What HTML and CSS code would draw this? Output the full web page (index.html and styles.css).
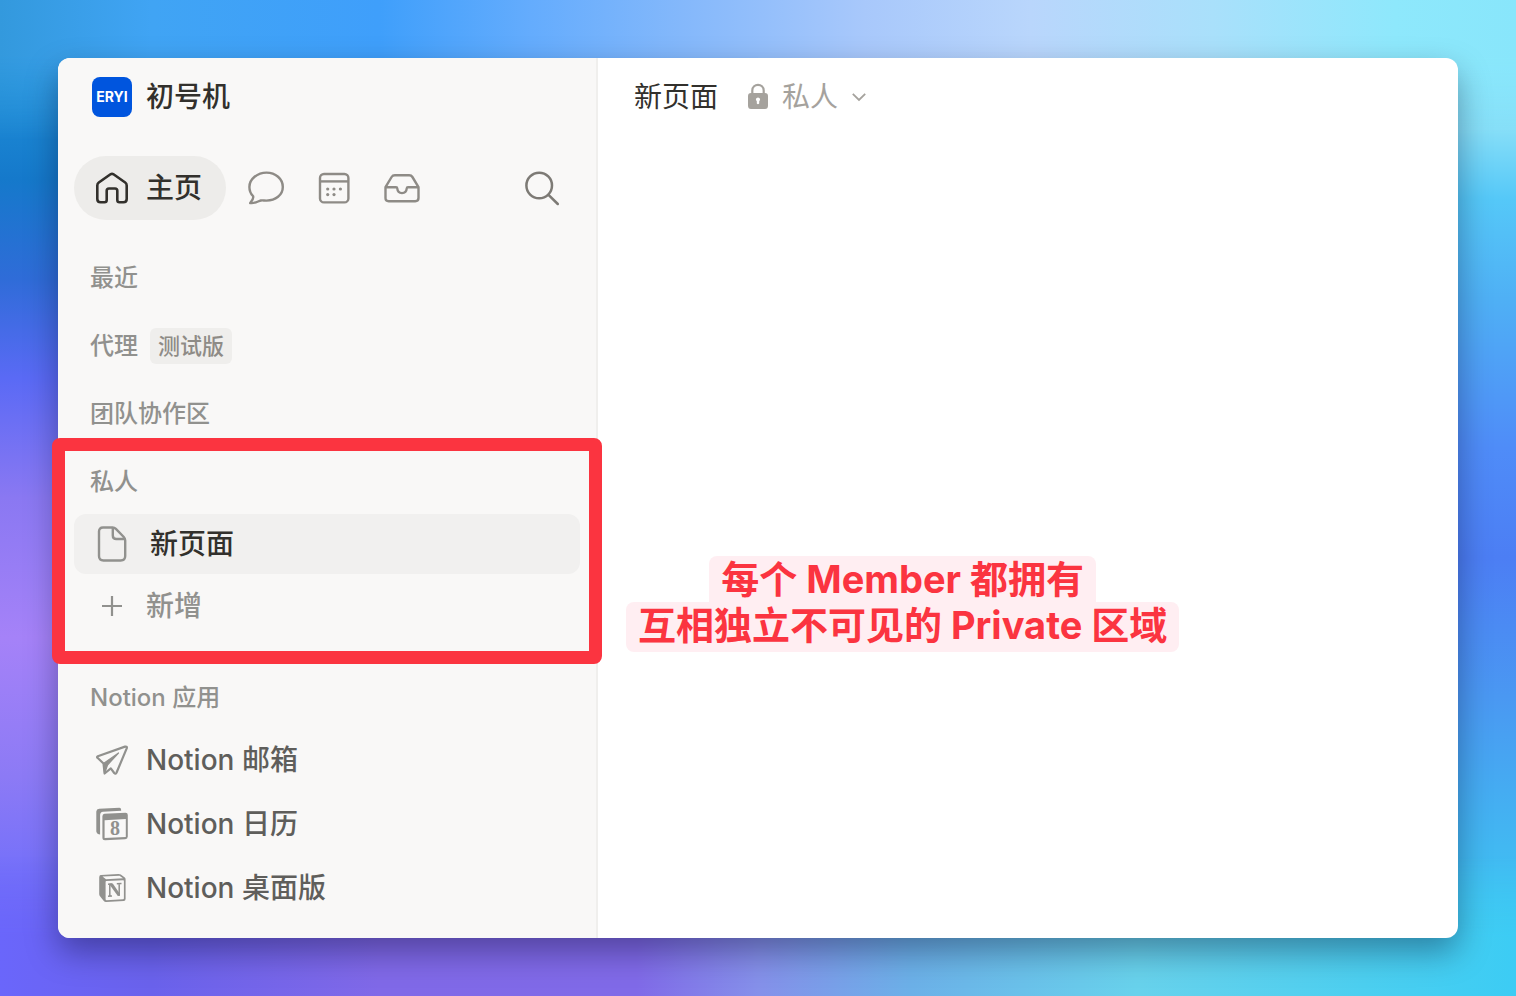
FILE: index.html
```html
<!DOCTYPE html>
<html lang="zh-CN">
<head>
<meta charset="utf-8">
<meta name="viewport" content="width=device-width, initial-scale=1">
<title>新页面</title>
<link rel="stylesheet" href="styles.css">
</head>
<body>
<div class="window">
  <aside class="sidebar">
    <header class="workspace">
      <span class="logo">ERYI</span>
      <span class="workspace-name">初号机</span>
    </header>
    <nav class="tabs">
      <button class="tab tab-active" type="button">
        <svg class="icon" viewBox="0 0 36 36" fill="none" stroke="currentColor" stroke-width="2.6" stroke-linejoin="round"><path d="M3.300 15.400Q3.300 13.600 4.800 12.500L16.500 4.300Q18 3.300 19.500 4.300L31.200 12.500Q32.700 13.600 32.700 15.400V29Q32.700 32.300 29.400 32.300H25.500Q23.300 32.300 23.300 30V20.800Q23.300 18.500 21 18.500H15Q12.700 18.500 12.700 20.800V30Q12.700 32.300 10.500 32.300H6.600Q3.300 32.300 3.300 29Z"/></svg>
        <span>主页</span>
      </button>
      <button class="tab" type="button" aria-label="聊天">
        <svg class="icon" viewBox="0 0 36 36" fill="none" stroke="currentColor" stroke-width="2.4" stroke-linejoin="round"><path d="M18.500 2.600C27.500 2.600 34.800 8.900 34.800 16.900S27.500 30.600 18.500 30.600C16 30.600 14.500 30.200 12.800 30.500C10 31.200 6.500 33.800 2.200 33C5 30 6 28.500 5 26C2.800 23.800 1.400 20.500 1.400 16.900C1.400 8.900 9.500 2.600 18.500 2.600Z"/></svg>
      </button>
      <button class="tab" type="button" aria-label="日历">
        <svg class="icon" viewBox="0 0 36 36" fill="none" stroke="currentColor" stroke-width="2.4"><rect x="4" y="4" width="28.400" height="28.400" rx="4"/><path d="M4 11.400H32.400"/><g fill="currentColor" stroke="none"><circle cx="11.700" cy="19" r="1.600"/><circle cx="18" cy="19" r="1.600"/><circle cx="24.400" cy="19" r="1.600"/><circle cx="11.700" cy="24.600" r="1.600"/><circle cx="18" cy="24.600" r="1.600"/></g></svg>
      </button>
      <button class="tab" type="button" aria-label="收件箱">
        <svg class="icon" viewBox="0 0 36 36" fill="none" stroke="currentColor" stroke-width="2.400" stroke-linejoin="round"><path d="M1.500 17.200L7.600 7Q8.700 5.200 10.800 5.200H25.200Q27.300 5.200 28.400 7L34.500 17.200V28Q34.500 31.200 31.300 31.200H4.700Q1.500 31.200 1.500 28ZM1.500 17.200H12Q13.200 17.200 13.300 18.500C13.800 24.600 22.200 24.600 22.700 18.500Q22.800 17.200 24 17.200H34.500"/></svg>
      </button>
      <button class="tab tab-search" type="button" aria-label="搜索">
        <svg class="icon" viewBox="0 0 36 36" fill="none" stroke="currentColor" stroke-width="2.500" stroke-linecap="round"><circle cx="15.200" cy="15.500" r="12.800"/><path d="M24.500 24.800L33.800 34"/></svg>
      </button>
    </nav>

    <section class="section"><h2 class="label">最近</h2></section>
    <section class="section"><h2 class="label">代理 <span class="tag">测试版</span></h2></section>
    <section class="section"><h2 class="label">团队协作区</h2></section>
    <section class="section private">
      <h2 class="label">私人</h2>
      <ul class="list list-private">
        <li><a class="item item-current" href="#">
          <svg class="icon" viewBox="0 0 36 36" fill="none" stroke="currentColor" stroke-width="2.400" stroke-linejoin="round"><path d="M9 1.500H18.500Q20.500 1.500 21.900 2.900L29.800 11Q31.200 12.400 31.200 14.400V30Q31.200 34.500 26.700 34.500H9.500Q5 34.500 5 30V5.500Q5 1.500 9 1.500ZM18.800 1.800V9.500Q18.800 13 22.300 13H30.500"/></svg>
          <span>新页面</span></a></li>
        <li><button class="item item-add" type="button">
          <svg class="icon" viewBox="0 0 36 36" fill="none" stroke="currentColor" stroke-width="2.200"><path d="M18 8V28M8 18H28"/></svg>
          <span>新增</span></button></li>
      </ul>
      <div class="highlight"></div>
    </section>
    <section class="section apps">
      <h2 class="label">Notion 应用</h2>
      <ul class="list list-apps">
        <li><a class="item" href="#">
          <svg class="icon" viewBox="0 0 36 36" fill="none" stroke="currentColor" stroke-width="2.200" stroke-linejoin="round"><path d="M3.500 15.800Q2.500 15 3.800 14.300L31 4.600Q33.500 4 32.700 6.400L22.600 30.500Q21.600 32.600 20.200 31L16.800 26.400L10.600 31.500L9.500 21.500Z"/><path d="M9.500 21.500L24.500 11L13.500 23L10.600 31.500Z" fill="currentColor" stroke-width="1.200"/></svg>
          <span>Notion 邮箱</span></a></li>
        <li><a class="item" href="#">
          <svg class="icon" viewBox="0 0 36 36"><path fill="currentColor" d="M2.300 5.500Q2.500 3 5.200 2.700L25.500 1.800Q27.500 2 27.200 4.700L9 5.800Q6.200 6.200 6.100 9V28.500Q3 28.500 2.300 25.500Z"/><path fill="currentColor" fill-rule="evenodd" d="M10.500 7.800L31.500 6.700Q33.800 6.800 33.800 9V30.500Q33.700 33 31.300 33.200L11 34.300Q8.400 34.300 8.400 31.800V10.200Q8.500 8 10.500 7.800ZM10.600 14.300V32L31.800 30.900V13Z"/><text class="glyph glyph-day" x="21" y="29">8</text></svg>
          <span>Notion 日历</span></a></li>
        <li><a class="item" href="#">
          <svg class="icon" viewBox="0 0 36 36"><path fill="currentColor" fill-rule="evenodd" d="M5.500 6Q5.700 5 7 4.900L24.500 3.900Q25.800 3.900 26.800 4.600L30.800 7.500Q31.600 8.200 31.600 9.300V29Q31.500 30.800 29.800 31L12 31.900Q10.600 31.900 9.600 30.700L6 26.200Q5.200 25.200 5.200 24V7.500ZM8.500 6.600L12 9.200L29 8.200L25.500 5.800ZM12.300 11.100Q11.600 11.200 11.600 12V29.300Q11.700 30.200 12.600 30.200L29 29.300Q29.900 29.200 29.900 28.300V11Q29.900 10.200 29.200 10.200Z"/><path fill="none" stroke="currentColor" stroke-width="1.500" d="M14 14.200L18 14M15.800 14.300V26M14 26.300L18 26M22.800 13.700L27.500 13.400M25.200 13.600V25.500"/><path fill="currentColor" d="M15.500 13.600L18.800 13.400L26 24V25.700L23.800 25.900L15.500 14.500Z"/></svg>
          <span>Notion 桌面版</span></a></li>
      </ul>
    </section>
  </aside>
  <main class="page">
    <header class="topbar">
      <h1 class="title">新页面</h1>
      <button class="privacy" type="button">
        <svg class="lock" viewBox="0 0 20 28"><path fill="none" stroke="currentColor" stroke-width="2.200" d="M4.300 11V7.500C4.300 0 15.700 0 15.700 7.500V11"/><path fill="currentColor" fill-rule="evenodd" d="M3 10H17Q20 10 20 13V22.500Q20 26 17 26H3Q0 26 0 22.500V13Q0 10 3 10ZM10 14.400A2.100 2.100 0 0 0 8.800 18.200V20.600Q10 22 11.200 20.600V18.200A2.100 2.100 0 0 0 10 14.400Z"/></svg>
        <span>私人</span>
        <svg class="chevron" viewBox="0 0 14 10" fill="none" stroke="currentColor" stroke-width="1.800"><path d="M0.800 1.800L7 8L13.200 1.800"/></svg>
      </button>
    </header>
    <p class="note"><mark class="note-line note-first">每个 Member 都拥有</mark><mark class="note-line">互相独立不可见的 Private 区域</mark></p>
  </main>
</div>
</body>
</html>
```
FILE: styles.css
```css
* { box-sizing: border-box; }
body {
  margin: 0;
  min-height: 100vh;
  padding: 58px;
  display: flex;
  position: relative;
  isolation: isolate;
  font-family: Inter, "Noto Sans CJK SC", sans-serif;
  font-size: 28px;
  line-height: 40px;
  color: #32302c;
  background:
    linear-gradient(#8ceafd 0, #86def8 13%, #55c8f8 20%, #4fb0f5 30%, #4f8cf8 45%, #4c7ef4 56%, #4a98f2 70%, #42b8f2 85%, #3ccdf2 100%) right / 50% 100% no-repeat,
    linear-gradient(#3b9fe8 0, #1f8fd8 8%, #1579cb 18%, #2f6cd8 28%, #5a6af5 38%, #8a78f2 50%, #a582f8 64%, #8c7af5 78%, #7470fa 88%, #6a62f8 100%);
}
/* Horizontal colour bands that fade into the side gradients */
body::before, body::after {
  content: "";
  position: absolute;
  z-index: -1;
  left: 0;
  right: 0;
  height: 140px;
}
body::before {
  top: 0;
  background: linear-gradient(90deg, #3399dd 0, #40a4f4 10%, #3f9ffb 25%, #64acfd 35%, #84b8fb 45%, #a8c8fb 57%, #b9d6fc 68%, #a9e0fb 80%, #8ee8fc 92%, #88e6fb 100%);
  mask-image: linear-gradient(#000 40%, transparent);
}
body::after {
  bottom: 0;
  background: linear-gradient(90deg, #6a66fb 0, #6a62ec 10%, #8069e8 25%, #806ae8 42%, #8590ea 50%, #6cb0e8 60%, #68d2ec 75%, #4ccff0 90%, #3cccf4 100%);
  mask-image: linear-gradient(transparent, #000 60%);
}
h1, h2, p, ul { margin: 0; padding: 0; font-size: inherit; }
ul { list-style: none; }
button { border: 0; padding: 0; background: none; font: inherit; color: inherit; cursor: pointer; }
a { color: inherit; text-decoration: none; }
svg { flex: none; display: block; }
.icon { width: 36px; height: 36px; }
.window {
  flex: 1;
  display: flex;
  border-radius: 12px;
  background: #fff;
  box-shadow: 0 14px 32px rgba(0, 0, 30, .36);
}
.sidebar {
  flex: none;
  width: 540px;
  padding: 0 16px 20px;
  background: #f9f8f7;
  border-right: 2px solid #f0efed;
  border-radius: 12px 0 0 12px;
}
.workspace { display: flex; align-items: center; gap: 14px; height: 78px; padding-left: 18px; font-weight: 500; }
.logo {
  width: 40px;
  height: 40px;
  border-radius: 8px;
  background: #0055de;
  color: #fff;
  font-size: 14px;
  font-weight: 700;
  text-align: center;
}
.tabs { display: flex; align-items: center; gap: 32px; margin: 20px 0 38px; color: #8e8b86; }
.tab-active {
  display: flex;
  align-items: center;
  gap: 16px;
  height: 64px;
  margin-right: -10px;
  padding: 0 24px 0 20px;
  border-radius: 32px;
  background: #edecea;
  color: #32302c;
  font-weight: 500;
}
.tab-search { margin-left: auto; margin-right: 20px; color: #7d7a75; }
.section { margin-bottom: 28px; }
.label { display: flex; align-items: center; gap: 12px; height: 40px; padding-left: 16px; font-size: 24px; font-weight: 500; color: #91918e; }
.tag { padding: 0 8px; border-radius: 6px; background: #efeeec; font-size: 22px; line-height: 36px; color: #8e8b86; }
.list { display: grid; margin-top: 12px; }
.list-private { gap: 2px; }
.list-apps { gap: 4px; }
.item { display: flex; align-items: center; gap: 16px; width: 100%; height: 60px; padding-left: 20px; border-radius: 12px; font-weight: 500; color: #5f5e5b; }
.item .icon { color: #91918e; }
.item-current { gap: 20px; background: #f1f0ef; color: #32302c; }
.item-add { color: #91918e; }
.private { position: relative; margin-bottom: 42px; }
.highlight { position: absolute; inset: -24px -22px -28px -22px; border: 13px solid #fb3440; border-radius: 8px; pointer-events: none; }
.apps { margin-bottom: 0; }
.glyph { fill: currentColor; font-family: "Liberation Serif", serif; font-weight: 700; text-anchor: middle; }
.glyph-day { font-size: 20px; }
.page { flex: 1; min-width: 0; }
.topbar { display: flex; align-items: center; gap: 30px; height: 78px; padding-left: 36px; }
.title { font-weight: 400; }
.privacy { display: flex; align-items: center; gap: 14px; color: #a5a29d; }
.lock { width: 20px; height: 28px; }
.chevron { width: 14px; height: 10px; }
.note {
  display: flex;
  flex-direction: column;
  align-items: center;
  width: fit-content;
  margin: 420px 0 0 28px;
  font-size: 38px;
  font-weight: 700;
  line-height: 46px;
}
.note-line { padding: 0 12px 4px; border-radius: 8px; background: #ffeef2; color: #fb3440; }
.note-first { padding-bottom: 0; border-radius: 8px 8px 0 0; }
```
